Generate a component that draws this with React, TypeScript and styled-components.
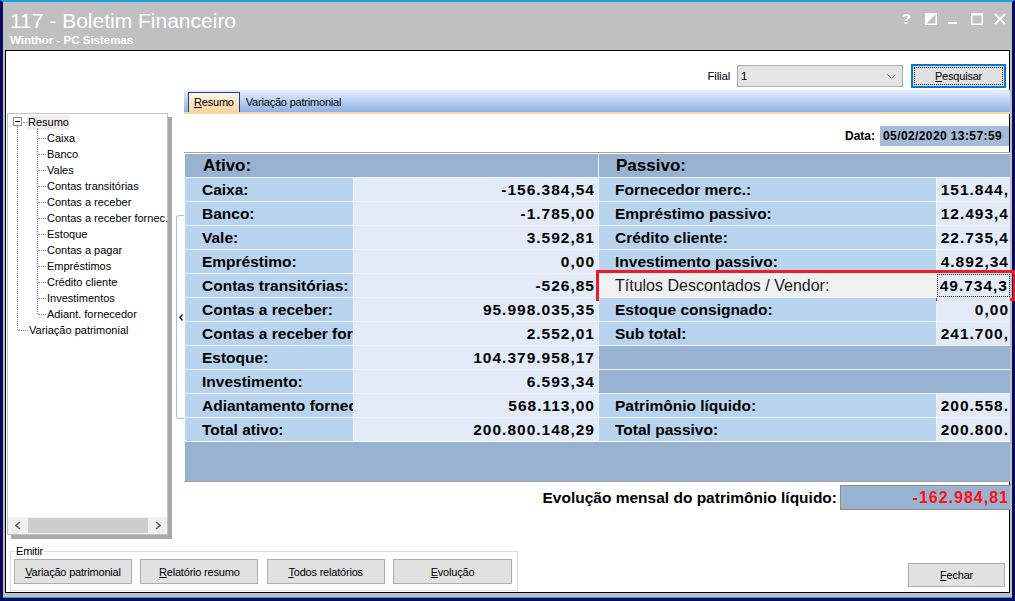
import React from 'react';
import styled, { createGlobalStyle } from 'styled-components';

const GlobalStyle = createGlobalStyle`
  html, body { margin: 0; padding: 0; background: #0b0b5c; }
  body { width: 1015px; height: 601px; overflow: hidden; font-family: "Liberation Sans", Arial, sans-serif; }
  * { box-sizing: border-box; }
`;

const SANS = `"Liberation Sans", Arial, sans-serif`;

/* ---------- window chrome ---------- */

const Frame = styled.div`
  width: 1015px;
  height: 601px;
  display: flex;
  flex-direction: column;
  background: #c0c0c0;
  border-left: 3px solid #0b0b5c;
  border-right: 3px solid #0b0b5c;
  border-top: 2px solid #1aa3dc;
  border-bottom: 3px solid #0b0b5c;
  padding: 0 2px 5px 2px;
  box-shadow: inset 0 -1px 0 #1aa3dc;
`;

const TitleBar = styled.div`
  height: 48px;
  flex: none;
  display: flex;
  justify-content: space-between;
  align-items: flex-start;
  padding: 7px 4px 0 5px;
`;

const TitleBlock = styled.div`
  display: flex;
  flex-direction: column;
  color: #fff;
  font-family: ${SANS};
`;

const Title = styled.div`
  font-size: 21px;
  line-height: 24px;
`;

const Subtitle = styled.div`
  font-size: 11.5px;
  font-weight: bold;
  line-height: 14px;
`;

const Controls = styled.div`
  display: flex;
  align-items: center;
  height: 14px;
  margin-top: 3px;
`;

const ControlIcon = styled.span<{ $gap: number }>`
  display: flex;
  align-items: center;
  justify-content: center;
  margin-left: ${p => p.$gap}px;
  color: #fff;
  font-family: ${SANS};
  font-weight: bold;
  font-size: 15px;
  line-height: 14px;
`;

const Client = styled.div`
  flex: 1;
  background: #fff;
  border: 1px solid #000;
  display: grid;
  grid-template-rows: 39px 1fr 49px;
  font-family: ${SANS};
  font-size: 11px;
  letter-spacing: -0.2px;
  color: #000;
`;

/* ---------- filter row ---------- */

const FilterRow = styled.div`
  display: flex;
  justify-content: flex-end;
  align-items: flex-start;
  padding: 13px 4px 0 0;
`;

const FieldLabel = styled.span`
  font-size: 11.5px;
  line-height: 22px;
  margin-top: 1px;
`;

const Select = styled.div`
  width: 166px;
  height: 22px;
  margin: 1px 0 0 7px;
  background: #e5e5e5;
  border: 1px solid #acacac;
  display: flex;
  align-items: center;
  justify-content: space-between;
  padding: 0 6px 0 3px;
  font-size: 11.5px;
`;

const Button = styled.button<{ $w: number; $h?: number }>`
  width: ${p => p.$w}px;
  height: ${p => p.$h ?? 25}px;
  background: #e1e1e1;
  border: 1px solid #adadad;
  font-family: ${SANS};
  font-size: 11px;
  letter-spacing: -0.2px;
  color: #000;
  padding: 0;
  display: flex;
  align-items: center;
  justify-content: center;
  position: relative;
`;

const FocusButton = styled(Button)`
  margin-left: 8px;
  border: 2px solid #0078d7;
  &::after {
    content: '';
    position: absolute;
    inset: 1px;
    border: 1px dotted #000;
  }
`;

/* ---------- main area ---------- */

const Main = styled.div`
  display: flex;
  min-height: 0;
`;

const Sidebar = styled.div`
  width: 166px;
  margin-left: 1px;
  padding-top: 23px;
  flex: none;
`;

const TreePanel = styled.div`
  width: 161px;
  height: 422px;
  border: 1px solid #c4c4c4;
  box-shadow: 4px 4px 0 #a9a9a9;
  display: flex;
  flex-direction: column;
  background: #fff;
`;

const Tree = styled.div`
  flex: 1;
  position: relative;
  font-size: 11px;
  letter-spacing: 0;
  &::before {
    content: '';
    position: absolute;
    left: 9px;
    top: 12px;
    height: 204px;
    border-left: 1px dotted #8a8a8a;
  }
`;

const TreeRow = styled.div<{ $indent: number }>`
  height: 16px;
  line-height: 15px;
  padding-left: ${p => p.$indent}px;
  position: relative;
  white-space: nowrap;
  display: flex;
  align-items: center;
`;

const Expander = styled.span`
  position: absolute;
  left: 5px;
  top: 3px;
  width: 9px;
  height: 9px;
  border: 1px solid #8f8f8f;
  background: #fff;
  &::after {
    content: '';
    position: absolute;
    left: 1px;
    right: 1px;
    top: 3px;
    border-top: 1px solid #000;
  }
`;

const Connector = styled.span<{ $left: number; $width: number }>`
  position: absolute;
  left: ${p => p.$left}px;
  width: ${p => p.$width}px;
  top: 8px;
  border-top: 1px dotted #8a8a8a;
`;

const Selected = styled.span`
  background: #eeeeee;
  padding: 0 1px;
`;

const ChildGroup = styled.div`
  position: relative;
  &::before {
    content: '';
    position: absolute;
    left: 29px;
    top: -2px;
    bottom: 8px;
    border-left: 1px dotted #8a8a8a;
  }
`;

const HScroll = styled.div`
  height: 17px;
  flex: none;
  background: #f0f0f0;
  display: flex;
  align-items: center;
  padding: 0 3px 0 4px;
  gap: 4px;
`;

const ScrollArrow = styled.span`
  width: 12px;
  display: flex;
  justify-content: center;
`;

const ScrollThumb = styled.span`
  flex: 1;
  height: 15px;
  background: #cdcdcd;
`;

const Splitter = styled.div`
  width: 11px;
  flex: none;
  padding: 125px 0 0 3px;
`;

const SplitHandle = styled.div`
  width: 9px;
  height: 204px;
  border: 1px solid #a9bfdc;
  border-right: none;
  border-radius: 3px 0 0 3px;
  display: flex;
  align-items: center;
  padding-left: 2px;
`;

const Workspace = styled.div`
  flex: 1;
  display: flex;
  flex-direction: column;
  min-width: 0;
`;

const TabBar = styled.div`
  height: 24px;
  flex: none;
  background: linear-gradient(#e6effc, #8fb2e6);
  border-bottom: 2px solid #fbd6a3;
  display: flex;
  align-items: flex-end;
  padding-left: 4px;
`;

const Tab = styled.div<{ $active?: boolean }>`
  height: 20px;
  padding: 0 5px;
  line-height: 19px;
  font-size: 11px;
  border: 1px solid ${p => (p.$active ? '#1f3f8f' : 'transparent')};
  border-bottom: none;
  background: ${p => (p.$active ? 'linear-gradient(#fff6e8, #fcd49e)' : 'transparent')};
`;

const DateRow = styled.div`
  display: flex;
  justify-content: flex-end;
  align-items: center;
  gap: 5px;
  margin-top: 12px;
  height: 20px;
  padding-right: 1px;
  font-weight: bold;
  font-size: 12px;
  letter-spacing: 0;
`;

const DateBox = styled.div`
  width: 129px;
  height: 20px;
  background: #a6bbd8;
  padding-left: 3px;
  line-height: 20px;
  letter-spacing: 0.4px;
`;

/* ---------- balance sheet ---------- */

const Sheet = styled.div`
  margin-top: 6px;
  border-top: 1px solid #a3a3a3;
  border-bottom: 1px solid #a3a3a3;
  padding: 1px 0 0 1px;
  background: #fff;
  display: flex;
  flex-direction: column;
  gap: 1px;
  letter-spacing: 0;
`;

const Columns = styled.div`
  display: grid;
  grid-template-columns: 413px 411px;
  column-gap: 1px;
  background: #f1f5fa;
`;

const Side = styled.div`
  display: flex;
  flex-direction: column;
  gap: 1px;
  background: #edf2f9;
`;

const HeaderCell = styled.div<{ $pad: number }>`
  height: 23px;
  background: #98b3d1;
  padding-left: ${p => p.$pad}px;
  font-weight: bold;
  font-size: 17px;
  line-height: 24px;
`;

const Row = styled.div<{ $label: number }>`
  height: 23px;
  display: grid;
  grid-template-columns: ${p => p.$label}px 1fr;
  column-gap: 1px;
  position: relative;
  font-size: 15.5px;
  font-weight: bold;
  line-height: 24px;
`;

const LabelCell = styled.div<{ $pad: number; $current?: boolean }>`
  background: ${p => (p.$current ? '#f0f0f0' : '#b8d3ee')};
  padding-left: ${p => p.$pad}px;
  white-space: nowrap;
  overflow: hidden;
  font-weight: ${p => (p.$current ? 'normal' : 'bold')};
  font-size: ${p => (p.$current ? '16px' : 'inherit')};
  color: ${p => (p.$current ? '#1a1a1a' : '#000')};
`;

const ValueCell = styled.div<{ $current?: boolean; $pad: number }>`
  background: #e3ebf8;
  text-align: right;
  padding-right: ${p => p.$pad}px;
  letter-spacing: 1px;
  white-space: nowrap;
  overflow: hidden;
  border: ${p => (p.$current ? '1px dotted #222' : 'none')};
  line-height: ${p => (p.$current ? '22px' : '24px')};
`;

const BlankRow = styled.div`
  height: 23px;
  background: #98b3d1;
`;

const Band = styled.div`
  height: 39px;
  background: #98b3d1;
`;

const Marker = styled.span`
  position: absolute;
  left: -3px;
  right: -6px;
  top: -4px;
  bottom: -4px;
  border: 3px solid #ec1c24;
  pointer-events: none;
`;

const EvolutionRow = styled.div`
  display: flex;
  justify-content: flex-end;
  align-items: center;
  gap: 3px;
  margin-top: 3px;
  font-weight: bold;
  font-size: 15.5px;
  letter-spacing: 0;
`;

const EvolutionBox = styled.div`
  width: 170px;
  height: 25px;
  background: #98b3d1;
  border: 1px solid #8c8c8c;
  border-right: none;
  text-align: right;
  padding-right: 1px;
  line-height: 24px;
  color: #ff1010;
  font-size: 16px;
  letter-spacing: 1px;
`;

/* ---------- footer ---------- */

const Footer = styled.div`
  display: flex;
  justify-content: space-between;
  align-items: flex-start;
  padding: 0 5px 0 4px;
`;

const Group = styled.div`
  width: 508px;
  height: 40px;
  margin-top: 8px;
  border: 1px solid #dcdcdc;
  position: relative;
  display: flex;
  justify-content: space-between;
  align-items: flex-start;
  padding: 7px 5px 0 3px;
`;

const GroupLabel = styled.span`
  position: absolute;
  left: 4px;
  top: -7px;
  background: #fff;
  padding: 0 1px;
  font-size: 11px;
  line-height: 13px;
`;

const CloseButton = styled(Button)`
  margin-top: 20px;
`;

const ativo: [string, string][] = [
  ['Caixa:', '-156.384,54'],
  ['Banco:', '-1.785,00'],
  ['Vale:', '3.592,81'],
  ['Empréstimo:', '0,00'],
  ['Contas transitórias:', '-526,85'],
  ['Contas a receber:', '95.998.035,35'],
  ['Contas a receber fornec.:', '2.552,01'],
  ['Estoque:', '104.379.958,17'],
  ['Investimento:', '6.593,34'],
  ['Adiantamento fornecedor:', '568.113,00'],
  ['Total ativo:', '200.800.148,29'],
];

type Passivo = { label?: string; value?: string; current?: boolean };
const passivo: Passivo[] = [
  { label: 'Fornecedor merc.:', value: '151.844,' },
  { label: 'Empréstimo passivo:', value: '12.493,4' },
  { label: 'Crédito cliente:', value: '22.735,4' },
  { label: 'Investimento passivo:', value: '4.892,34' },
  { label: 'Títulos Descontados / Vendor:', value: '49.734,3', current: true },
  { label: 'Estoque consignado:', value: '0,00' },
  { label: 'Sub total:', value: '241.700,' },
  {},
  {},
  { label: 'Patrimônio líquido:', value: '200.558.' },
  { label: 'Total passivo:', value: '200.800.' },
];

const resumoItems = [
  'Caixa',
  'Banco',
  'Vales',
  'Contas transitórias',
  'Contas a receber',
  'Contas a receber fornec.',
  'Estoque',
  'Contas a pagar',
  'Empréstimos',
  'Crédito cliente',
  'Investimentos',
  'Adiant. fornecedor',
];

const Chevron = ({ dir }: { dir: 'left' | 'right' | 'down' }) => {
  const d =
    dir === 'left' ? 'M5 1 L1 4.5 L5 8' : dir === 'right' ? 'M1 1 L5 4.5 L1 8' : 'M0.5 0.5 L4.5 4.5 L8.5 0.5';
  const w = dir === 'down' ? 9 : 6;
  const h = dir === 'down' ? 5 : 9;
  return (
    <svg width={w} height={h} viewBox={`0 0 ${w} ${h}`}>
      <path d={d} fill="none" stroke="#606060" strokeWidth={dir === 'down' ? 1 : 1.6} />
    </svg>
  );
};

export default function App() {
  return (
    <>
      <GlobalStyle />
      <Frame>
        <TitleBar>
          <TitleBlock>
            <Title>117 - Boletim Financeiro</Title>
            <Subtitle>Winthor - PC Sistemas</Subtitle>
          </TitleBlock>
          <Controls>
            <ControlIcon $gap={0}>?</ControlIcon>
            <ControlIcon $gap={14}>
              <svg width="12" height="12" viewBox="0 0 12 12">
                <rect x="0.75" y="0.75" width="10.5" height="10.5" fill="none" stroke="#fff" strokeWidth="1.5" />
                <path d="M1 1 L11 1 L1 11 Z" fill="#fff" />
              </svg>
            </ControlIcon>
            <ControlIcon $gap={11}>
              <svg width="9" height="12" viewBox="0 0 9 12">
                <rect x="0" y="9" width="9" height="2" fill="#fff" />
              </svg>
            </ControlIcon>
            <ControlIcon $gap={14}>
              <svg width="12" height="12" viewBox="0 0 12 12">
                <rect x="0.75" y="1" width="10.5" height="10.25" fill="none" stroke="#fff" strokeWidth="1.5" />
                <rect x="0" y="0.5" width="12" height="2" fill="#fff" />
              </svg>
            </ControlIcon>
            <ControlIcon $gap={11}>
              <svg width="12" height="12" viewBox="0 0 12 12">
                <path d="M1 1 L11 11 M11 1 L1 11" stroke="#fff" strokeWidth="1.8" />
              </svg>
            </ControlIcon>
          </Controls>
        </TitleBar>

        <Client>
          <FilterRow>
            <FieldLabel>Filial</FieldLabel>
            <Select>
              <span>1</span>
              <Chevron dir="down" />
            </Select>
            <FocusButton $w={95} $h={24}>
              <span>
                <u>P</u>esquisar
              </span>
            </FocusButton>
          </FilterRow>

          <Main>
            <Sidebar>
              <TreePanel>
                <Tree>
                  <TreeRow $indent={19}>
                    <Expander />
                    <Connector $left={15} $width={4} />
                    <Selected>Resumo</Selected>
                  </TreeRow>
                  <ChildGroup>
                    {resumoItems.map(item => (
                      <TreeRow key={item} $indent={39}>
                        <Connector $left={30} $width={8} />
                        {item}
                      </TreeRow>
                    ))}
                  </ChildGroup>
                  <TreeRow $indent={21}>
                    <Connector $left={10} $width={10} />
                    Variação patrimonial
                  </TreeRow>
                </Tree>
                <HScroll>
                  <ScrollArrow>
                    <Chevron dir="left" />
                  </ScrollArrow>
                  <ScrollThumb />
                  <ScrollArrow>
                    <Chevron dir="right" />
                  </ScrollArrow>
                </HScroll>
              </TreePanel>
            </Sidebar>

            <Splitter>
              <SplitHandle>
                <svg width="4" height="7" viewBox="0 0 4 7">
                  <path d="M3.5 0.5 L0.8 3.5 L3.5 6.5" fill="none" stroke="#000" strokeWidth="1.3" />
                </svg>
              </SplitHandle>
            </Splitter>

            <Workspace>
              <TabBar>
                <Tab $active>
                  <u>R</u>esumo
                </Tab>
                <Tab>Variação patrimonial</Tab>
              </TabBar>

              <DateRow>
                <span>Data:</span>
                <DateBox>05/02/2020 13:57:59</DateBox>
              </DateRow>

              <Sheet>
                <Columns>
                  <Side>
                    <HeaderCell $pad={18}>Ativo:</HeaderCell>
                    {ativo.map(([label, value]) => (
                      <Row key={label} $label={168}>
                        <LabelCell $pad={17}>{label}</LabelCell>
                        <ValueCell $pad={3}>{value}</ValueCell>
                      </Row>
                    ))}
                  </Side>
                  <Side>
                    <HeaderCell $pad={17}>Passivo:</HeaderCell>
                    {passivo.map((item, i) =>
                      item.label ? (
                        <Row key={i} $label={337}>
                          <LabelCell $pad={16} $current={item.current}>
                            {item.label}
                          </LabelCell>
                          <ValueCell $pad={1} $current={item.current}>
                            {item.value}
                          </ValueCell>
                          {item.current && <Marker />}
                        </Row>
                      ) : (
                        <BlankRow key={i} />
                      )
                    )}
                  </Side>
                </Columns>
                <Band />
              </Sheet>

              <EvolutionRow>
                <span>Evolução mensal do patrimônio líquido:</span>
                <EvolutionBox>-162.984,81</EvolutionBox>
              </EvolutionRow>
            </Workspace>
          </Main>

          <Footer>
            <Group>
              <GroupLabel>Emitir</GroupLabel>
              <Button $w={118}>
                <span>
                  <u>V</u>ariação patrimonial
                </span>
              </Button>
              <Button $w={118}>
                <span>
                  <u>R</u>elatório resumo
                </span>
              </Button>
              <Button $w={118}>
                <span>
                  <u>T</u>odos relatórios
                </span>
              </Button>
              <Button $w={119}>
                <span>
                  <u>E</u>volução
                </span>
              </Button>
            </Group>
            <CloseButton $w={97} $h={24}>
              <span>
                <u>F</u>echar
              </span>
            </CloseButton>
          </Footer>
        </Client>
      </Frame>
    </>
  );
}
